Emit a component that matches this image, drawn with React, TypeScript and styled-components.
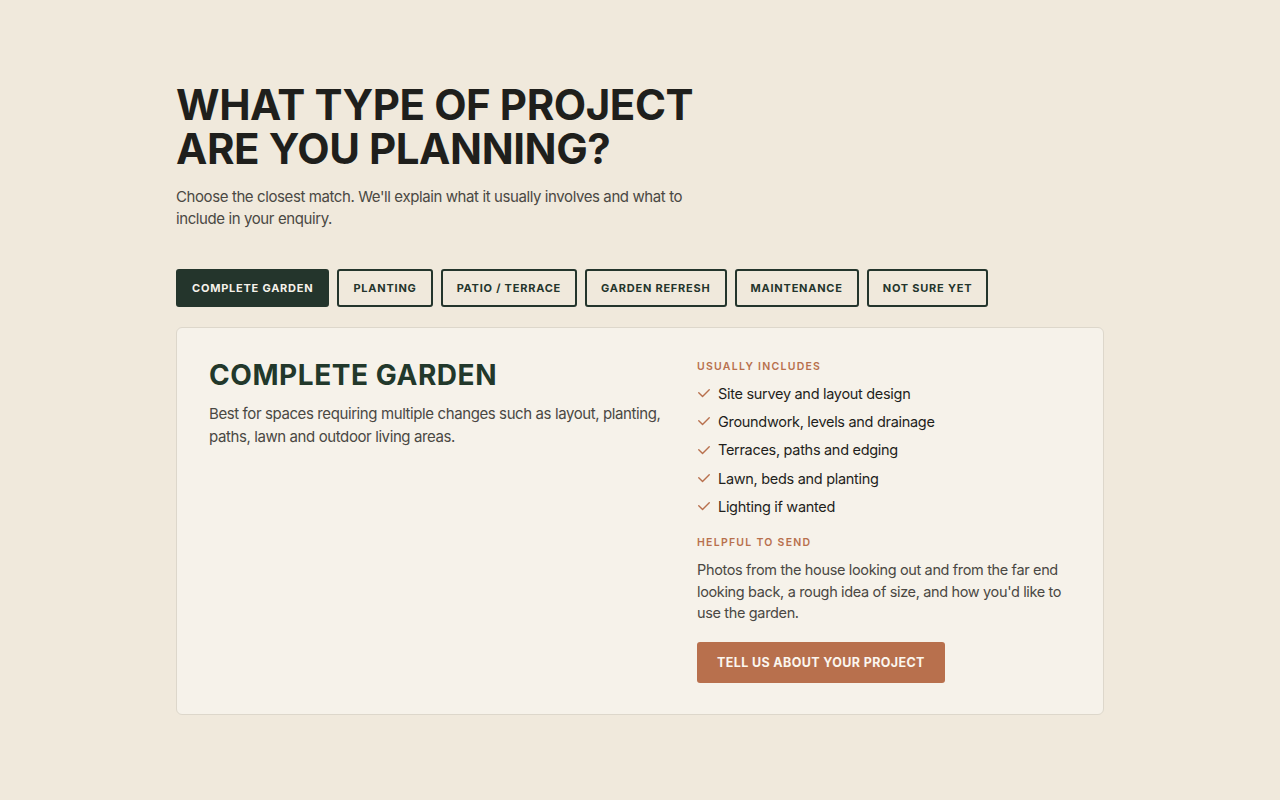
import React, { useState } from "react";
import styled, { createGlobalStyle } from "styled-components";

const GlobalStyle = createGlobalStyle`
  body {
    margin: 0;
    background: #f0e9dc;
    font-family: Inter, "Noto Sans", sans-serif;
    color: #1f1f1c;
  }
`;

const tabs = [
  "Complete garden",
  "Planting",
  "Patio / terrace",
  "Garden refresh",
  "Maintenance",
  "Not sure yet",
];

const includes = [
  "Site survey and layout design",
  "Groundwork, levels and drainage",
  "Terraces, paths and edging",
  "Lawn, beds and planting",
  "Lighting if wanted",
];

function Check() {
  return (
    <svg width="14" height="14" viewBox="0 0 24 24" fill="none" stroke="#b8704d" strokeWidth="2.4" strokeLinecap="round" strokeLinejoin="round">
      <path d="M3 11.5l6.5 6.5L21 6.5" />
    </svg>
  );
}

function App() {
  const [active, setActive] = useState(0);
  return (
    <Page>
      <GlobalStyle />
      <Wrap>
        <Title>
          What type of project
          <br />
          are you planning?
        </Title>
        <Lead>
          Choose the closest match. We'll explain what it usually involves and what to include in your enquiry.
        </Lead>
        <TabRow>
          {tabs.map((t, i) => (
            <Tab key={t} active={i === active} onClick={() => setActive(i)}>
              {t}
            </Tab>
          ))}
        </TabRow>
        <Card>
          <div>
            <CardTitle>Complete garden</CardTitle>
            <CardText>
              Best for spaces requiring multiple changes such as layout, planting, paths, lawn and outdoor living areas.
            </CardText>
          </div>
          <div>
            <Label>Usually includes</Label>
            <List>
              {includes.map((item) => (
                <Item key={item}>
                  <Check />
                  {item}
                </Item>
              ))}
            </List>
            <Label>Helpful to send</Label>
            <SendText>
              Photos from the house looking out and from the far end looking back, a rough idea of size, and how you'd like to use the garden.
            </SendText>
            <Cta>Tell us about your project</Cta>
          </div>
        </Card>
      </Wrap>
    </Page>
  );
}

const Page = styled.div`
  padding: 83px 0 80px;
`;

const Wrap = styled.div`
  width: 928px;
  margin: 0 auto;
`;

const Title = styled.h1`
  margin: 0;
  font-size: 42px;
  line-height: 44px;
  font-weight: 700;
  text-transform: uppercase;
  letter-spacing: -0.01em;
  color: #1f1f1c;
`;

const Lead = styled.p`
  margin: 15px 0 0;
  width: 520px;
  font-size: 15px;
  line-height: 22px;
  letter-spacing: -0.4px;
  color: #4a4843;
`;

const TabRow = styled.div`
  display: flex;
  gap: 8px;
  margin-top: 39px;
`;

const Tab = styled.button<{ active: boolean }>`
  height: 38px;
  padding: 0 14px;
  border: 2px solid #24352c;
  border-radius: 3px;
  background: ${(p) => (p.active ? "#24352c" : "transparent")};
  color: ${(p) => (p.active ? "#f6f2ea" : "#24352c")};
  font-family: Inter, sans-serif;
  font-size: 11px;
  font-weight: 700;
  letter-spacing: 0.07em;
  text-transform: uppercase;
  cursor: pointer;
`;

const Card = styled.div`
  margin-top: 20px;
  display: grid;
  grid-template-columns: 458px 1fr;
  gap: 30px;
  padding: 32px 32px 31px;
  background: #f6f2ea;
  border: 1px solid #ddd7cb;
  border-radius: 6px;
`;

const CardTitle = styled.h2`
  margin: 0;
  font-size: 28px;
  line-height: 30px;
  font-weight: 700;
  text-transform: uppercase;
  letter-spacing: 0.02em;
  color: #22382b;
`;

const CardText = styled.p`
  margin: 12px 0 0;
  font-size: 15px;
  line-height: 23px;
  letter-spacing: -0.4px;
  color: #4a4843;
`;

const Label = styled.div`
  font-size: 10.5px;
  font-weight: 600;
  letter-spacing: 0.12em;
  text-transform: uppercase;
  color: #b8704d;
`;

const List = styled.ul`
  list-style: none;
  margin: 6px 0 16px;
  padding: 0;
`;

const Item = styled.li`
  display: flex;
  align-items: center;
  gap: 7px;
  height: 28.3px;
  font-size: 14.5px;
  letter-spacing: -0.3px;
  color: #1f1f1c;
`;

const SendText = styled.p`
  margin: 10px 0 0;
  width: 370px;
  font-size: 14.5px;
  line-height: 21.5px;
  letter-spacing: -0.35px;
  color: #4a4843;
`;

const Cta = styled.button`
  margin-top: 18px;
  height: 41px;
  padding: 0 20px;
  border: none;
  border-radius: 3px;
  background: #b8704d;
  color: #fbf6ef;
  font-family: Inter, sans-serif;
  font-size: 12.5px;
  font-weight: 700;
  letter-spacing: 0.03em;
  text-transform: uppercase;
  cursor: pointer;
`;

export default App;
